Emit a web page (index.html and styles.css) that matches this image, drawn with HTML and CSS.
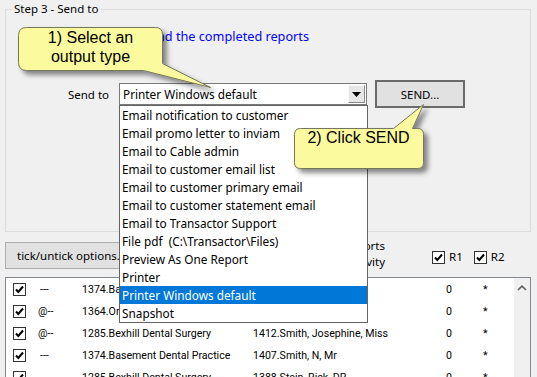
FILE: index.html
```html
<!DOCTYPE html>
<html>
<head>
<meta charset="utf-8">
<link rel="stylesheet" href="styles.css">
</head>
<body>
<div class="screen">
  <div class="group">
    <div class="legend">Step 3 - Send to</div>
    <div class="hint">Select how to send the completed reports</div>
    <div class="send-row">
      <div class="send-label">Send to</div>
      <div class="combo">
        <span class="combo-text">Printer Windows default</span>
        <span class="combo-btn"><svg width="9" height="5" viewBox="0 0 9 5"><path d="M0 0H9L4.5 5Z" fill="#000"/></svg></span>
        <ul class="dropdown">
          <li>Email notification to customer</li>
          <li>Email promo letter to inviam</li>
          <li>Email to Cable admin</li>
          <li>Email to customer email list</li>
          <li>Email to customer primary email</li>
          <li>Email to customer statement email</li>
          <li>Email to Transactor Support</li>
          <li>File pdf  (C:\Transactor\Files)</li>
          <li>Preview As One Report</li>
          <li>Printer</li>
          <li class="sel">Printer Windows default</li>
          <li>Snapshot</li>
        </ul>
      </div>
      <div class="send-btn">SEND...</div>
    </div>
  </div>

  <div class="tools">
    <div class="tick-btn">tick/untick options...</div>
    <div class="filter-label">Only reports<br>with activity</div>
    <span class="chk hdr-chk r1"><svg width="11" height="11" viewBox="0 0 11 11"><path d="M2 5.5L4.3 8L9 2.5" fill="none" stroke="#000" stroke-width="2"/></svg></span>
    <span class="chk-text">R1</span>
    <span class="chk hdr-chk r2"><svg width="11" height="11" viewBox="0 0 11 11"><path d="M2 5.5L4.3 8L9 2.5" fill="none" stroke="#000" stroke-width="2"/></svg></span>
    <span class="chk-text">R2</span>
  </div>

  <div class="list">
    <div class="rows">
      <div class="row">
        <div class="c1"><span class="chk"><svg width="11" height="11" viewBox="0 0 11 11"><path d="M2 5.5L4.3 8L9 2.5" fill="none" stroke="#000" stroke-width="2"/></svg></span></div>
        <div class="c2 dash">---</div>
        <div class="c3">1374.Basement Dental Practice</div>
        <div class="c4">1401.Jones, A</div>
        <div class="c5">0</div>
        <div class="c6">*</div>
      </div>
      <div class="row">
        <div class="c1"><span class="chk"><svg width="11" height="11" viewBox="0 0 11 11"><path d="M2 5.5L4.3 8L9 2.5" fill="none" stroke="#000" stroke-width="2"/></svg></span></div>
        <div class="c2">@--</div>
        <div class="c3">1364.Orchard Dental Care</div>
        <div class="c4">1399.Brown, T</div>
        <div class="c5">0</div>
        <div class="c6">*</div>
      </div>
      <div class="row">
        <div class="c1"><span class="chk"><svg width="11" height="11" viewBox="0 0 11 11"><path d="M2 5.5L4.3 8L9 2.5" fill="none" stroke="#000" stroke-width="2"/></svg></span></div>
        <div class="c2">@--</div>
        <div class="c3">1285.Bexhill Dental Surgery</div>
        <div class="c4">1412.Smith, Josephine, Miss</div>
        <div class="c5">0</div>
        <div class="c6">*</div>
      </div>
      <div class="row">
        <div class="c1"><span class="chk"><svg width="11" height="11" viewBox="0 0 11 11"><path d="M2 5.5L4.3 8L9 2.5" fill="none" stroke="#000" stroke-width="2"/></svg></span></div>
        <div class="c2 dash">---</div>
        <div class="c3">1374.Basement Dental Practice</div>
        <div class="c4">1407.Smith, N, Mr</div>
        <div class="c5">0</div>
        <div class="c6">*</div>
      </div>
      <div class="row">
        <div class="c1"><span class="chk"><svg width="11" height="11" viewBox="0 0 11 11"><path d="M2 5.5L4.3 8L9 2.5" fill="none" stroke="#000" stroke-width="2"/></svg></span></div>
        <div class="c2 dash">---</div>
        <div class="c3">1285.Bexhill Dental Surgery</div>
        <div class="c4">1388.Stein, Rick, DR</div>
        <div class="c5">0</div>
        <div class="c6">*</div>
      </div>
    </div>
    <div class="scroll">
      <svg class="up" width="10" height="6" viewBox="0 0 10 6"><path d="M1 5L5 1.2L9 5" fill="none" stroke="#606060" stroke-width="1.6"/></svg>
    </div>
  </div>

  <div class="bubble b1">
    <svg width="240" height="100" viewBox="0 0 240 100">
      <defs>
        <filter id="sh1" x="-20%" y="-20%" width="150%" height="160%">
          <feDropShadow dx="4" dy="4" stdDeviation="2.5" flood-color="#000" flood-opacity="0.45"/>
        </filter>
      </defs>
      <path d="M26.5 27.5H155.5Q162.5 27.5 162.5 34.5V63.5L210.5 87.5L143.5 70.5H26.5Q18.5 70.5 18.5 62.5V35.5Q18.5 27.5 26.5 27.5Z" fill="#fcfa9e" stroke="#76765a" stroke-width="1" filter="url(#sh1)"/>
    </svg>
    <div class="b1-text">1) Select an<br>output type</div>
  </div>

  <div class="bubble b2">
    <svg width="440" height="180" viewBox="0 0 440 180">
      <defs>
        <filter id="sh2" x="-20%" y="-20%" width="150%" height="160%">
          <feDropShadow dx="4" dy="4" stdDeviation="2.5" flood-color="#000" flood-opacity="0.45"/>
        </filter>
      </defs>
      <path d="M300.5 128.5H393.5L423.5 104.5L412.5 128.5H417.5Q423.5 128.5 423.5 134.5V162.5Q423.5 168.5 417.5 168.5H300.5Q294.5 168.5 294.5 162.5V134.5Q294.5 128.5 300.5 128.5Z" fill="#fcfa9e" stroke="#76765a" stroke-width="1" filter="url(#sh2)"/>
    </svg>
    <div class="b2-text">2) Click SEND</div>
  </div>
</div>
</body>
</html>
```
FILE: styles.css
```css
html, body {
  margin: 0;
  padding: 0;
}
body {
  background: #f0f0f0;
  font-family: "Noto Sans", "Open Sans", sans-serif;
  font-size: 11.5px;
  color: #000;
  width: 537px;
  height: 377px;
  overflow: hidden;
}
.screen {
  position: relative;
  width: 537px;
  height: 377px;
  padding-top: 9px;
  box-sizing: border-box;
  overflow: hidden;
}
.group {
  margin: 0 6px 0 5px;
  border: 1px solid #dcdcdc;
  height: 221px;
  display: flex;
  flex-direction: column;
}
.legend {
  align-self: flex-start;
  margin: -9px 0 0 6px;
  padding: 0 2px;
  background: #f0f0f0;
  line-height: 16px;
}
.hint {
  margin-top: 11px;
  line-height: 16px;
  font-size: 12.7px;
  color: #0000ff;
  text-align: right;
  padding-right: 221px;
  white-space: nowrap;
}
.send-row {
  margin-top: 36px;
  height: 28px;
  display: flex;
  align-items: center;
}
.send-label {
  width: 103px;
  text-align: right;
}
.combo {
  position: relative;
  margin-left: 10px;
  width: 248px;
  height: 22px;
  box-sizing: border-box;
  border: 1px solid #7a7a7a;
  background: #fff;
  display: flex;
  align-items: center;
}
.combo-text {
  flex: 1;
  padding-left: 3px;
  font-size: 11.8px;
  white-space: nowrap;
}
.combo-btn {
  width: 17px;
  height: 18px;
  margin-right: 1px;
  box-sizing: border-box;
  background: #e6e6e6;
  border: 1px solid;
  border-color: #f8f8f8 #8a8a8a #8a8a8a #f8f8f8;
  display: flex;
  align-items: center;
  justify-content: center;
}
.dropdown {
  position: absolute;
  left: -1px;
  top: 21px;
  width: 249px;
  margin: 0;
  padding: 0;
  list-style: none;
  box-sizing: border-box;
  border: 1px solid #646464;
  background: #fff;
  font-size: 11.8px;
  z-index: 5;
}
.dropdown li {
  height: 18px;
  line-height: 18px;
  padding-left: 2px;
  white-space: pre;
}
.dropdown li.sel {
  background: #0078d7;
  color: #fff;
}
.send-btn {
  margin-left: 8px;
  width: 90px;
  height: 28px;
  box-sizing: border-box;
  border: 2px solid #6b6b6b;
  background: #e1e1e1;
  display: flex;
  align-items: center;
  justify-content: center;
}
.tools {
  height: 45px;
  display: flex;
  align-items: flex-start;
  padding-left: 5px;
}
.tick-btn {
  margin-top: 10px;
  width: 125px;
  height: 27px;
  box-sizing: border-box;
  border: 1px solid #adadad;
  background: #e1e1e1;
  padding-left: 11px;
  line-height: 25px;
  white-space: nowrap;
}
.filter-label {
  width: 255px;
  margin-top: 6px;
  text-align: right;
  line-height: 16px;
  white-space: nowrap;
}
.chk {
  width: 13px;
  height: 13px;
  box-sizing: border-box;
  border: 1px solid #333;
  background: #fff;
  display: flex;
  align-items: center;
  justify-content: center;
}
.hdr-chk {
  margin-top: 19px;
}
.hdr-chk.r1 {
  margin-left: 47px;
}
.hdr-chk.r2 {
  margin-left: 11px;
}
.chk-text {
  margin-top: 17px;
  margin-left: 4px;
  line-height: 16px;
}
.list {
  margin: 0 6px 0 5px;
  border: 1px solid #828790;
  background: #fff;
  height: 120px;
  display: flex;
}
.rows {
  flex: 1;
  font-family: "Roboto", "Liberation Sans", sans-serif;
  font-size: 10.6px;
}
.row {
  height: 22px;
  display: flex;
  align-items: center;
  white-space: nowrap;
}
.c1 {
  width: 32px;
  padding-left: 7px;
  box-sizing: border-box;
}
.c2 {
  width: 44px;
}
.c2.dash {
  padding-left: 2px;
  box-sizing: border-box;
}
.c3 {
  width: 171px;
}
.c4 {
  width: 193px;
}
.c5 {
  width: 37px;
}
.c6 {
  flex: 1;
}
.scroll {
  width: 16px;
  background: #f0f0f0;
  display: flex;
  flex-direction: column;
  align-items: center;
  padding-top: 7px;
  box-sizing: border-box;
}
.bubble {
  position: absolute;
  left: 0;
  top: 0;
  z-index: 10;
}
.bubble svg {
  display: block;
}
.b1-text, .b2-text {
  position: absolute;
  font-family: "Liberation Sans", Arial, sans-serif;
  font-size: 16px;
  line-height: 19px;
  text-align: center;
  white-space: nowrap;
}
.b1-text {
  left: 18px;
  top: 28px;
  width: 145px;
}
.b2-text {
  left: 294px;
  top: 128px;
  width: 129px;
}
```
